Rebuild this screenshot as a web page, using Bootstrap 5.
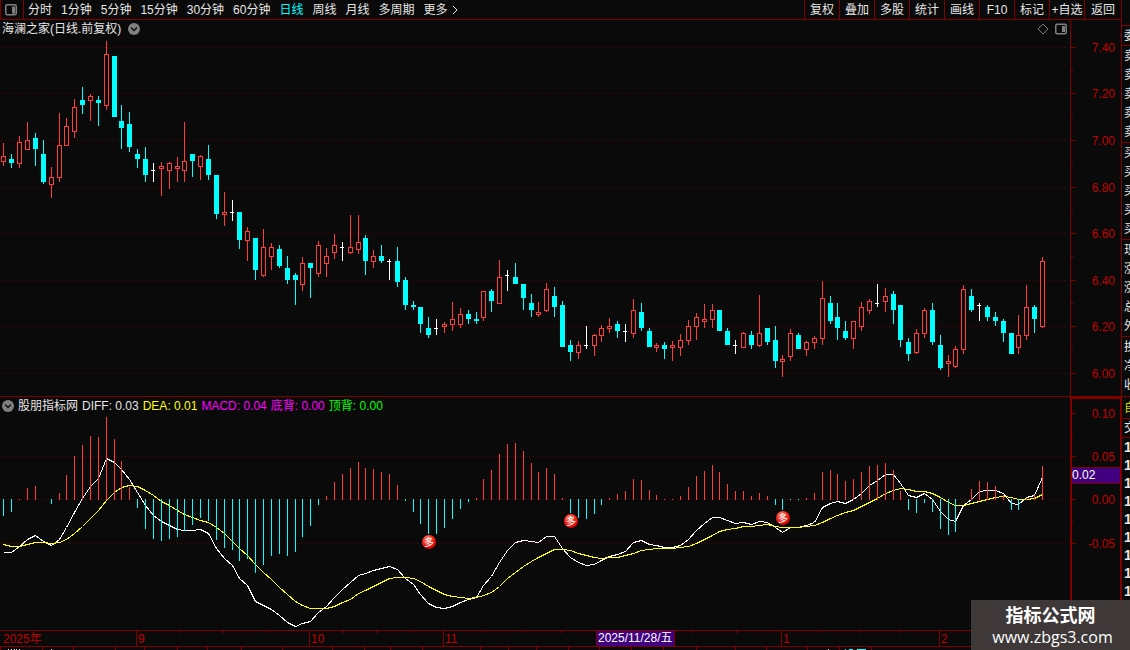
<!DOCTYPE html>
<html lang="zh-CN">
<head>
<meta charset="utf-8">
<meta name="viewport" content="width=device-width, initial-scale=1">
<title>海澜之家 日线</title>
<link href="https://cdn.jsdelivr.net/npm/bootstrap@5.3.0/dist/css/bootstrap.min.css" rel="stylesheet">
<style>
:root { --line: #800000; --axis: #c00000; --bg: #0a0a0a; --fg: #e6e6e6; }
body { background: var(--bg); color: var(--fg); font: 12px/18px "Liberation Sans", "Noto Sans CJK SC", sans-serif; }
button { background: none; border: 0; padding: 0; color: inherit; font: inherit; white-space: nowrap; }
svg { display: block; }
.topbar { height: 20px; border-bottom: 1px solid var(--line); border-left: 1px solid var(--line); }
.toggle { width: 23px; padding-left: 4px; border-right: 1px solid var(--line); }
.periods { gap: 9px; padding-left: 4px; }
.periods .active { color: #0ff; }
.tools button { width: 35px; border-left: 1px solid var(--line); }
.tools button:last-child { width: 37px; }
.pane-price { flex: 377 1 0; min-height: 0; border-bottom: 1px solid var(--line); }
.pane-macd { flex: 233 1 0; min-height: 0; }
.plot { min-width: 0; }
.scale-col { width: 51px; border-left: 1px solid var(--line); }
.pane-macd .scale-col { border: 2px solid var(--line); border-width: 2px 1px 0 2px; }
.caption-row { top: 0; left: 2px; height: 18px; gap: 7px; }
.pane-macd .caption-row { gap: 4px; }
.corner { top: 3px; right: 3px; gap: 6px; }
.dates { height: 16px; border-top: 1px solid var(--line); }
.status { height: 4px; border-top: 1px solid var(--line); }
.side { width: 9px; border-left: 1px solid var(--line); padding-top: 25px; }
.side ul { border-top: 1px solid var(--line); padding-left: 2px; }
.side li { height: 19px; line-height: 20px; white-space: nowrap; }
.side .five { padding-bottom: 1px; }
.side .three { padding-bottom: 2px; }
.side .tab li { height: 21px; color: #d8d800; line-height: 22px; }
.side .deal li { height: 18px; line-height: 18px; }
.side .ticks li { height: 18px; font-size: 14px; font-weight: 700; line-height: 18px; }
.stamp { width: 159px; height: 50px; background: rgba(64, 58, 58, .97); color: #fff; }
.stamp-name { font: 700 18px/26px "Noto Sans CJK SC", sans-serif; padding-top: 1px; }
.stamp-url { font: 16px/20px "Open Sans", sans-serif; padding-left: 4px; }
.magenta { color: #f0f; } .yellow { color: #ff0; } .green { color: #0f0; }
text { font-size: 12px; }
</style>
</head>
<body>
<div class="d-flex vh-100 overflow-hidden position-relative">
  <main class="d-flex flex-column flex-grow-1 plot">
    <header class="topbar d-flex flex-shrink-0">
      <button class="toggle" type="button" aria-label="侧栏">
        <svg width="12" height="12"><rect x=".75" y=".75" width="10.5" height="10" rx="1.5" fill="none" stroke="#808080" stroke-width="1.5"/><path d="M7 2.500h3v7h-3z" fill="#808080"/></svg>
      </button>
      <nav class="periods d-flex flex-grow-1" aria-label="周期">
        <button type="button">分时</button><button type="button">1分钟</button><button type="button">5分钟</button><button type="button">15分钟</button><button type="button">30分钟</button><button type="button">60分钟</button><button type="button" class="active">日线</button><button type="button">周线</button><button type="button">月线</button><button type="button">多周期</button>
        <button type="button" class="d-flex align-items-center">更多<svg class="ms-1" width="7" height="10"><path d="M1 1l4 4-4 4" fill="none" stroke="#e6e6e6"/></svg></button>
      </nav>
      <div class="tools d-flex">
        <button type="button">复权</button><button type="button">叠加</button><button type="button">多股</button><button type="button">统计</button><button type="button">画线</button><button type="button">F10</button><button type="button">标记</button><button type="button">+自选</button><button type="button">返回</button>
      </div>
    </header>

    <section class="pane-price d-flex">
      <div class="plot flex-grow-1 position-relative">
        <svg id="price" class="position-absolute top-0 start-0 w-100 h-100"></svg>
        <div class="caption-row position-absolute d-flex align-items-center">
          <span>海澜之家(日线.前复权)</span>
          <button type="button" aria-label="展开"><svg width="12" height="12"><circle cx="6" cy="6" r="6" fill="#808080"/><path d="M3 4.500l3 3 3-3" fill="none" stroke="#111" stroke-width="1.500"/></svg></button>
        </div>
        <div class="corner position-absolute d-flex">
          <svg width="12" height="12"><path d="M6 1l5 5-5 5-5-5z" fill="none" stroke="#777"/></svg>
          <svg width="12" height="12"><rect x=".75" y="1.250" width="10.5" height="9.500" rx="1.5" fill="none" stroke="#808080" stroke-width="1.5"/><path d="M7 3h3v6h-3z" fill="#808080"/></svg>
        </div>
      </div>
      <div class="scale-col position-relative"><svg id="priceScale" class="position-absolute top-0 start-0 w-100 h-100"></svg></div>
    </section>

    <section class="pane-macd d-flex">
      <div class="plot flex-grow-1 position-relative">
        <svg id="macd" class="position-absolute top-0 start-0 w-100 h-100"></svg>
        <div class="caption-row position-absolute d-flex align-items-center">
          <button type="button" class="d-flex align-items-center gap-1"><svg width="12" height="12"><circle cx="6" cy="6" r="6" fill="#808080"/><path d="M3 4.500l3 3 3-3" fill="none" stroke="#111" stroke-width="1.500"/></svg>股朋指标网</button>
          <span>DIFF: 0.03</span><span class="yellow">DEA: 0.01</span><span class="magenta">MACD: 0.04</span><span class="magenta">底背: 0.00</span><span class="green">顶背: 0.00</span>
        </div>
      </div>
      <div class="scale-col position-relative"><svg id="macdScale" class="position-absolute top-0 start-0 w-100 h-100"></svg></div>
    </section>

    <div class="dates position-relative flex-shrink-0"><svg id="dates" class="w-100 h-100"></svg></div>
    <footer class="status flex-shrink-0"><svg id="status" class="w-100 h-100"></svg></footer>
  </main>

  <aside class="side flex-shrink-0 overflow-hidden">
    <ul class="list-unstyled mb-0"><li>委</li></ul>
    <ul class="list-unstyled mb-0 five"><li>卖</li><li>卖</li><li>卖</li><li>卖</li><li>卖</li></ul>
    <ul class="list-unstyled mb-0 five"><li>买</li><li>买</li><li>买</li><li>买</li><li>买</li></ul>
    <ul class="list-unstyled mb-0 five"><li>现</li><li>涨</li><li>涨</li><li>总</li><li>外</li></ul>
    <ul class="list-unstyled mb-0 three"><li>换</li><li>净</li><li>收</li></ul>
    <ul class="list-unstyled mb-0 tab"><li>自</li></ul>
    <ul class="list-unstyled mb-0 deal"><li>交</li></ul>
    <ul class="list-unstyled mb-0 ticks"><li>1</li><li>1</li><li>1</li><li>1</li><li>1</li><li>1</li><li>1</li><li>1</li><li>1</li></ul>
  </aside>

  <div class="stamp position-absolute bottom-0 end-0 text-center">
    <div class="stamp-name">指标公式网</div>
    <div class="stamp-url">www.zbgs3.com</div>
  </div>
</div>

<script>
// One entry per day: kind (r up, c down, w flat), high, body top, body bottom, low.
const candles = `r143,156,162,166 c154,159,163,168 r136,142,164,168 r122,140,150,150 c133,138,149,166 c140,154,182,184 r167,177,185,198 r113,145,178,182 r118,126,146,146 r99,107,132,138
c87,100,105,114 r94,96,101,121 c96,100,103,126 r41,54,106,110 c56,56,117,117 c105,121,128,149 c112,124,147,152 c149,154,159,168 c147,159,175,182 w163,170,171,182
r162,166,169,196 r162,163,171,189 r157,166,169,182 r122,161,171,182 c154,154,161,177 r155,156,167,180 c145,159,175,180 c175,175,214,219 r192,212,215,226 w200,212,213,221
c212,212,240,249 r227,231,241,261 c238,238,270,280 r229,247,276,277 r243,247,257,270 c245,249,266,268 c256,268,280,284 c273,275,280,305 r257,263,285,291 c263,263,268,298
r241,245,274,277 r248,256,264,277 r234,245,253,259 w242,247,248,261 r215,247,253,254 r215,242,250,254 c235,238,261,275 r250,256,262,268 c245,256,261,263 w259,261,262,280
c247,261,282,287 c277,280,305,310 c301,305,307,310 c307,307,324,333 c317,328,335,338 w319,328,329,335 r322,324,327,333 r302,319,325,331 r308,314,325,328 c310,314,319,324
c312,319,321,324 r291,291,318,321 c289,291,301,312 r260,277,304,304 w270,275,276,291 c263,277,284,284 c284,284,298,310 c294,303,310,317 r302,312,315,317 r283,289,311,312
c287,296,307,317 c301,305,347,347 c340,345,352,361 r341,345,353,359 w326,345,346,349 r334,335,346,356 r325,328,336,342 r318,326,329,333 c321,324,331,338 w324,331,332,342
r299,310,334,338 c303,312,328,331 c328,331,347,347 r343,345,348,352 c342,345,349,359 r341,345,348,361 r334,340,348,356 r320,326,341,345 r313,317,327,340 r304,319,322,328
r304,310,320,328 c310,310,331,331 c328,331,345,345 w340,345,346,354 r332,333,348,348 c331,335,345,349 r295,333,346,347 c328,328,342,345 c326,340,361,368 r355,359,362,377
r329,333,357,361 c333,335,349,349 r341,342,350,356 r336,338,343,349 r281,298,339,345 c296,303,321,324 c303,317,328,340 c321,331,338,340 r321,321,339,349 r302,307,327,331
r299,301,311,314 w284,303,304,307 r288,296,302,312 c291,294,310,324 c305,305,340,347 c338,342,354,361 r329,333,353,354 r308,310,334,338 c303,310,342,345 c335,345,368,370
r355,361,364,377 r346,349,367,368 r285,289,350,354 c289,296,310,312 w303,305,306,321 c305,307,317,321 c312,317,321,326 c319,321,333,342 c333,333,354,354 r315,335,348,354
r285,307,336,340 c305,307,319,333 r257,261,327,328`.split(/\s+/).map(s => [s[0], ...s.slice(1).split(',').map(Number)]);
// End of each histogram bar; 0 means no bar.
const hist = [516,512,499,488,486,0,504,493,475,456,445,436,437,417,439,461,487,508,529,539,541,539,537,531,525,518,521,540,548,550,561,559,573,565,556,554,556,552,537,526,505,496,482,474,468,462,468,469,472,474,485,
501,512,524,534,534,528,519,509,502,498,479,470,454,444,443,451,463,472,468,474,498,513,518,519,514,505,498,494,491,479,480,490,495,499,499,496,487,476,471,465,472,484,491,491,496,493,496,505,510,500,500,498,493,472,470,474,481,479,472,466,465,463,470,491,510,513,503,512,529,535,532,0,489,481,482,486,495,510,510,498,495,466];
const diff = [552,552,546,539,535,541,545,539,527,512,498,486,478,458,462,469,479,492,505,515,521,525,529,530,530,529,533,548,558,565,578,585,601,605,609,615,622,626,623,621,612,606,597,589,582,575,573,570,568,566,569,
578,584,594,603,607,608,606,602,599,597,585,576,562,550,542,540,541,542,536,536,548,557,562,565,564,560,556,554,551,542,540,544,545,547,547,545,539,530,523,517,517,520,523,522,524,521,522,527,532,527,527,525,522,507,503,501,503,499,493,485,480,474,474,483,495,497,493,499,511,519,521,505,499,491,490,490,493,503,504,497,495,477];
const dea = [544,546,546,544,542,542,543,542,539,533,526,518,510,500,492,487,485,486,490,495,501,505,510,514,517,520,522,527,533,541,548,555,564,572,579,587,594,601,605,608,608,608,606,602,599,593,590,586,582,578,577,
577,578,581,586,590,594,596,597,598,597,595,592,586,578,572,566,561,557,553,549,549,550,553,555,557,558,557,557,555,553,550,549,548,548,548,547,546,543,539,535,531,529,528,526,526,525,524,526,527,527,527,526,525,522,518,515,512,510,506,502,498,493,490,488,489,491,491,493,497,502,505,505,503,501,499,497,496,497,499,499,498,494];
const RED = '#ff3c3c', CYAN = '#00ffff', LINE = '#800000', AXIS = '#c00000';
const byId = id => document.getElementById(id);
const dayX = i => 3 + Math.ceil(7.868 * i - .05);
const box = (x, y, w, h, fill) => `<rect x="${x}" y="${y}" width="${w}" height="${h}" fill="${fill}" shape-rendering="crispEdges"/>`;
const label = (x, y, s, fill, anchor = 'start') => `<text x="${x}" y="${y}" fill="${fill}" text-anchor="${anchor}">${s}</text>`;
const grid = (y, w) => `<path d="M1 ${y + .5}H${w - 2}" stroke="#680000" stroke-dasharray="1 3" shape-rendering="crispEdges"/>`;

function draw() {
  const w = byId('price').clientWidth, hp = byId('price').clientHeight, hm = byId('macd').clientHeight;
  const X = x => Math.round(x * w / 1070);
  const P = y => Math.round((y - 20) * hp / 376);
  const M = y => Math.round((y - 397) * hm / 233);
  const prices = [[47, '7.40'], [93, '7.20'], [140, '7.00'], [187, '6.80'], [233, '6.60'], [280, '6.40'], [326, '6.20'], [373, '6.00']];

  let s = prices.map(p => grid(P(p[0]), w)).join('');
  candles.forEach(([k, hi, top, bot, lo], i) => {
    const x = X(dayX(i)), a = P(hi), b = P(top), c = P(bot), d = P(lo);
    if (k === 'r') s += box(x, a, 1, b - a, RED) + box(x, c, 1, d - c, RED)
      + `<rect x="${x - 1.5}" y="${b + .5}" width="4" height="${Math.max(c - b - 1, 1)}" fill="none" stroke="${RED}" shape-rendering="crispEdges"/>`;
    else { const f = k === 'c' ? CYAN : '#fff'; s += box(x, a, 1, d - a, f) + box(x - 2, b, k === 'c' ? 5 : 4, Math.max(c - b, 1), f); }
  });
  byId('price').innerHTML = s;

  s = '';
  prices.forEach(([y, t], i) => {
    s += box(0, P(y), 5, 1, LINE) + label(44, P(y) + 5, t, AXIS, 'end');
    if (i < 7) s += box(0, P(y + 23), 2, 1, LINE);
  });
  byId('priceScale').innerHTML = s;

  const curve = a => a.map((y, i) => `${X(dayX(i)) + .5},${M(y) + .5}`).join(' ');
  s = `<defs><radialGradient id="ball" cx=".4" cy=".3" r=".7"><stop offset="0" stop-color="#ff9a80"/><stop offset=".5" stop-color="#f83020"/><stop offset="1" stop-color="#c80000"/></radialGradient></defs>`;
  s += [456, 499, 543].map(y => grid(M(y), w)).join('');
  s += `<polyline points="${curve(diff)}" fill="none" stroke="#fff" shape-rendering="crispEdges"/><polyline points="${curve(dea)}" fill="none" stroke="#ff0" shape-rendering="crispEdges"/>`;
  hist.forEach((y, i) => {
    if (!y) return;
    s += y < 500 ? box(X(dayX(i)), M(y), 1, M(500) - M(y), RED) : box(X(dayX(i)), M(499), 1, Math.max(M(y) - M(499), 1), CYAN);
  });
  [[429, 542], [571, 521], [783, 518]].forEach(([x, y]) => {
    s += `<circle cx="${X(x)}" cy="${M(y)}" r="7" fill="url(#ball)"/><text x="${X(x)}" y="${M(y) + 4}" fill="#fff" text-anchor="middle" style="font-size:10px">多</text>`;
  });
  byId('macd').innerHTML = s;

  s = '';
  [[413, '0.10'], [456, '0.05'], [499, '0.00'], [543, '-0.05']].forEach(([y, t]) => {
    s += box(0, M(y) - 2, 4, 1, LINE) + label(43, M(y) + 3, t, AXIS, 'end');
  });
  [435, 478, 521].forEach(y => s += box(0, M(y) - 2, 1, 1, LINE));
  s += box(0, M(467) - 2, 49, 17, LINE) + box(0, M(468) - 2, 49, 15, '#400080') + label(0, M(475) + 2, '0.02', '#fff');
  byId('macdScale').innerHTML = s;

  s = label(3, 12, '2025年', AXIS);
  [[136, '9'], [309, '10'], [443, '11'], [781, '1'], [939, '2']].forEach(([x, t]) => s += box(X(x), 0, 1, 15, LINE) + label(X(x) + 2, 12, t, AXIS));
  [179, 223, 266, 343, 376, 410, 482, 522, 561, 691, 736, 821, 860, 900].forEach(x => s += box(X(x), 0, 1, 2, LINE));
  s += box(X(596), 0, 79, 15, LINE) + box(X(597), 0, 77, 15, '#400080') + label(X(597) + 1, 11, '2025/11/28/五', '#fff');
  byId('dates').innerHTML = s;

  s = [0, 42, 73, 115, 144, 177, 207, 241, 282, 332, 364, 390, 422, 480, 508, 536, 568, 599, 631, 663, 696, 735, 766, 807, 839, 871].map(x => box(X(x), 0, 1, 3, LINE)).join('');
  [[8, 1], [11, 1], [14, 1], [16, 1], [19, 1], [51, 1], [828, 1]].forEach(([x, n]) => s += box(X(x), 2, n, 1, '#e6e6e6'));
  [[845, 1], [849, 4], [857, 9]].forEach(([x, n]) => s += box(X(x), 2, n, 1, CYAN));
  byId('status').innerHTML = s;
}
draw();
addEventListener('resize', draw);
</script>
<script src="https://cdn.jsdelivr.net/npm/bootstrap@5.3.0/dist/js/bootstrap.bundle.min.js"></script>
</body>
</html>
